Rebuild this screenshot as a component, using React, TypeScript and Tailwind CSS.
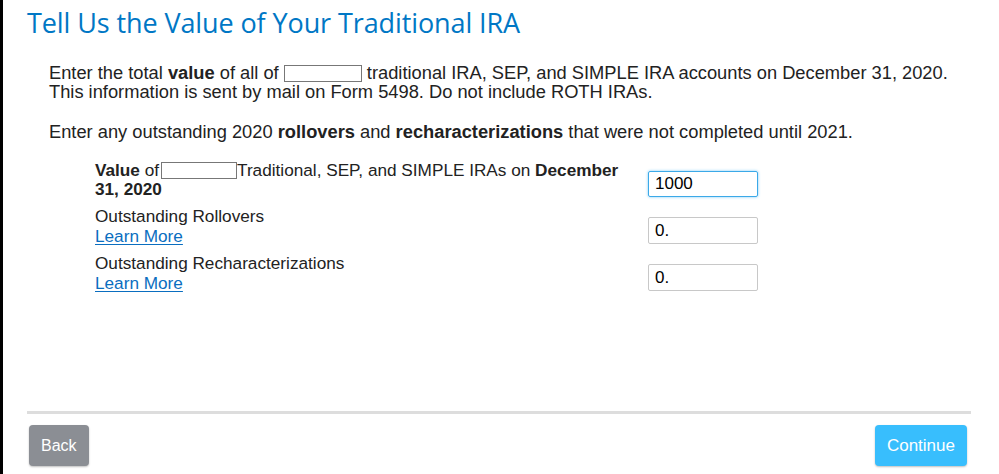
import React from 'react'

const inlineBox = 'inline-block align-[-3px] border border-[#777] bg-white'

function Row({
  label,
  value,
  focused,
  learnMore,
}: {
  label: React.ReactNode
  value: string
  focused?: boolean
  learnMore?: boolean
}) {
  return (
    <div className="flex items-start">
      <div className="w-[553px] pr-6 text-[17.2px] leading-[19px] text-[#222]">
        <div>{label}</div>
        {learnMore && (
          <a href="#" className="block text-[#0a6ec0] underline underline-offset-2 leading-[20px]">
            Learn More
          </a>
        )}
      </div>
      <input
        readOnly
        value={value}
        className={
          focused
            ? 'mt-[10px] w-[110px] h-[26px] px-[6px] text-[17px] text-black border border-[#3ba9e8] rounded-[2px] shadow-[0_0_3px_#7cc8f5] outline-none'
            : 'mt-[10px] w-[110px] h-[27px] px-[6px] text-[17px] text-black border border-[#c8c8c8] rounded-[2px] outline-none'
        }
      />
    </div>
  )
}

export default function App() {
  return (
    <div className="flex min-h-[474px] bg-white font-['Liberation_Sans',Arial,sans-serif]">
      <div className="w-[3px] shrink-0 bg-black" />
      <div className="flex-1 flex flex-col pl-[24px] pr-[28px]">
        <h1 className="pt-[6px] text-[27px] leading-[34px] font-['Open_Sans',sans-serif] text-[#0077c5] tracking-[-0.1px]">
          Tell Us the Value of Your Traditional IRA
        </h1>

        <div className="pl-[22px] pt-[23px] text-[18.3px] leading-[19px] text-[#222]">
          <p>
            Enter the total <b>value</b> of all of{' '}
            <span className={`${inlineBox} w-[78px] h-[17px]`} /> traditional IRA, SEP, and SIMPLE IRA
            accounts on December 31, 2020.
            <br />
            This information is sent by mail on Form 5498. Do not include ROTH IRAs.
          </p>
          <p className="mt-[21px]">
            Enter any outstanding 2020 <b>rollovers</b> and <b>recharacterizations</b> that were not completed
            until 2021.
          </p>
        </div>

        <div className="pl-[68px] pt-[20px] flex flex-col gap-[8px]">
          <Row
            value="1000"
            focused
            label={
              <>
                <b>Value</b> of<span className={`${inlineBox} ml-[2px] w-[76px] h-[17px]`} />
                Traditional, SEP, and SIMPLE IRAs on <b>December 31, 2020</b>
              </>
            }
          />
          <Row value="0." learnMore label="Outstanding Rollovers" />
          <Row value="0." learnMore label="Outstanding Recharacterizations" />
        </div>

        <div className="mt-auto border-t-[3px] border-[#dddddd]" />
        <div className="flex justify-between pt-[11px] pb-[8px] pl-[2px] pr-[4px]">
          <button className="h-[41px] px-[12px] rounded-[4px] bg-[#8b8e94] text-white text-[16px] shadow-[0_1px_2px_rgba(0,0,0,0.25)]">
            Back
          </button>
          <button className="h-[41px] px-[12px] rounded-[4px] bg-[#38befd] text-white text-[17px] shadow-[0_1px_2px_rgba(0,0,0,0.25)]">
            Continue
          </button>
        </div>
      </div>
    </div>
  )
}
